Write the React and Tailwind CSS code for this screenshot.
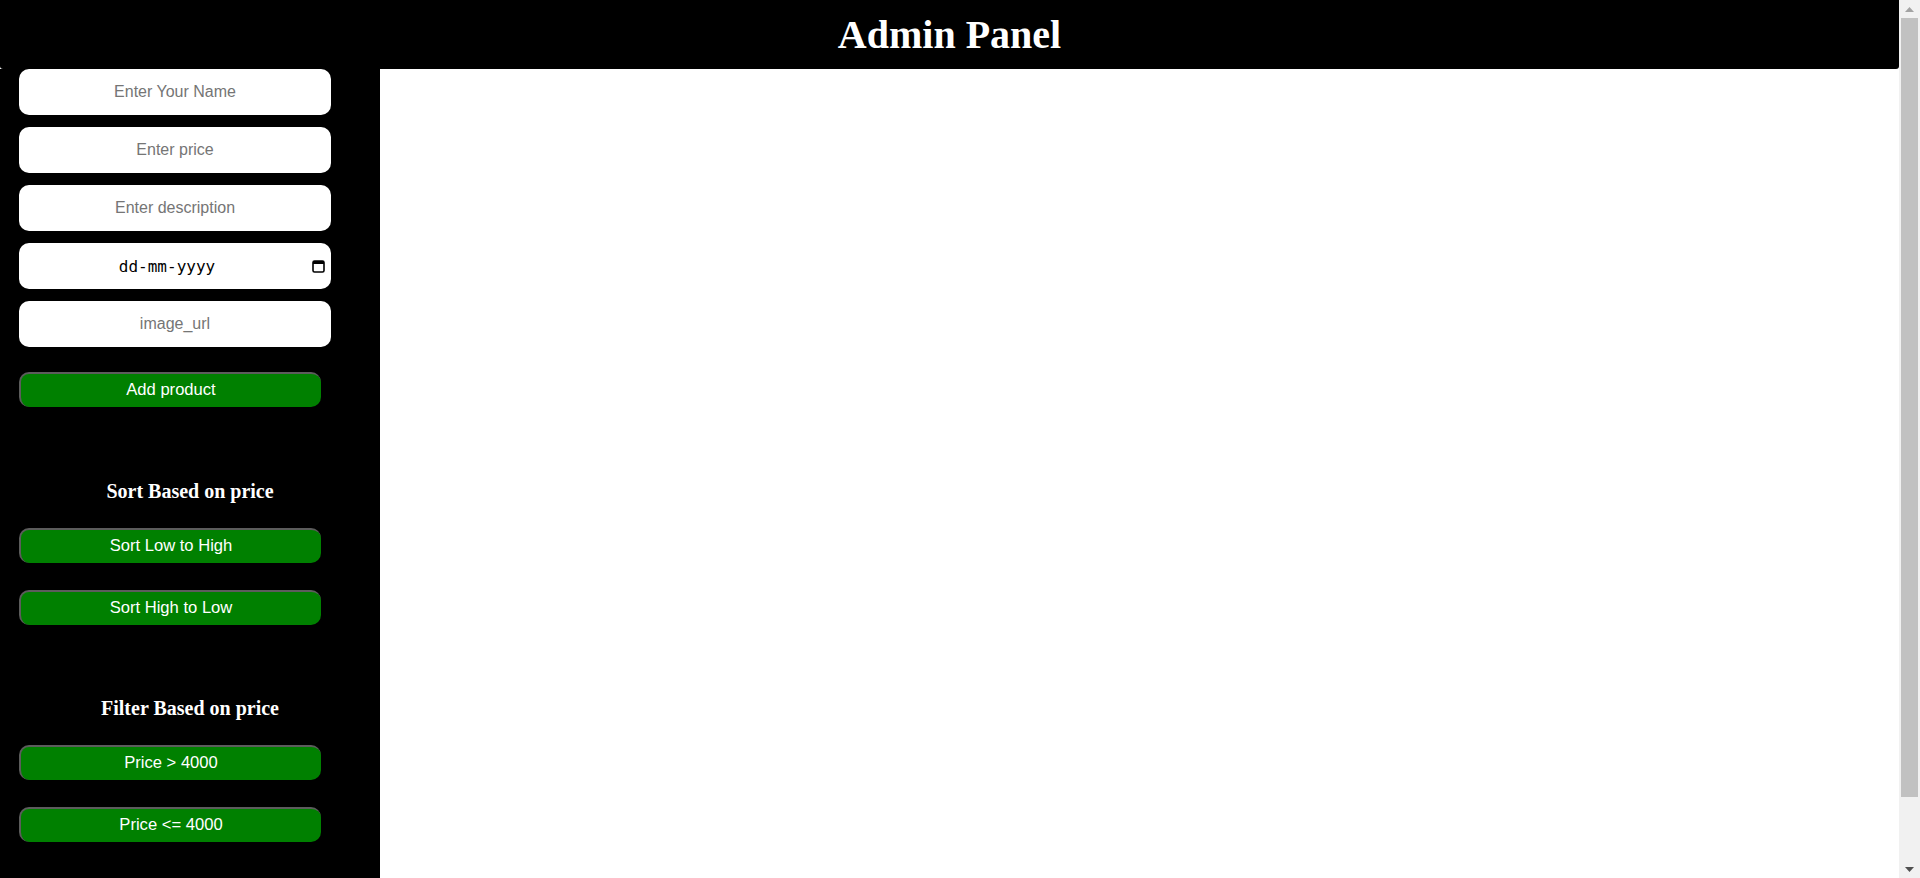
const inputClass =
    "h-[46px] w-[312px] rounded-[10px] bg-white text-center text-[16px] text-black placeholder:text-[#757575] outline-none font-['Liberation_Sans',Arial,sans-serif]";

const buttonClass =
    "h-[35px] w-[302px] rounded-[10px] border-l-2 border-t-2 border-[#5c5c5c] bg-[#008000] text-[16.6px] text-white font-['Liberation_Sans',Arial,sans-serif]";

const headingClass =
    "text-center text-[20px] leading-[23px] font-bold text-white font-['Liberation_Serif','Times_New_Roman',serif]";

const CalendarIcon = () => (
    <svg width="13" height="14" viewBox="0 0 13 14" className="pointer-events-none absolute right-[6px] top-[16px]">
        <rect x="1" y="2" width="11" height="11" rx="1.5" fill="none" stroke="#000" strokeWidth="1.6" />
        <rect x="1" y="2" width="11" height="3" fill="#000" />
    </svg>
);

// page scrollbar as drawn in the screenshot
const ScrollBar = () => (
    <div className="flex h-screen w-[21px] shrink-0 flex-col bg-[#f1f1f1]">
        <div className="flex h-[18px] items-center justify-center">
            <svg width="9" height="5" viewBox="0 0 9 5">
                <polygon points="4.5,0 9,5 0,5" fill="#a3a3a3" />
            </svg>
        </div>
        <div className="mx-[2px] h-[779px] bg-[#c1c1c1]"></div>
        <div className="flex-1"></div>
        <div className="flex h-[18px] items-center justify-center">
            <svg width="9" height="5" viewBox="0 0 9 5">
                <polygon points="0,0 9,0 4.5,5" fill="#505050" />
            </svg>
        </div>
    </div>
);

const App = () => {
    return (
        <div className="flex h-screen overflow-hidden bg-white">
            <div className="flex-1 overflow-hidden">
                <div className="flex min-h-[949px] flex-col">
                    <header className="flex h-[69px] items-center justify-center rounded-b-[3px] bg-black">
                        <h1 className="text-[40px] font-bold leading-none text-white font-['Liberation_Serif','Times_New_Roman',serif]">
                            Admin Panel
                        </h1>
                    </header>

                    <div className="flex flex-1">
                        <aside className="flex w-[380px] flex-col bg-black pl-[19px]">
                            <form className="flex flex-col gap-[12px]">
                                <input type="text" placeholder="Enter Your Name" className={inputClass} />
                                <input type="text" placeholder="Enter price" className={inputClass} />
                                <input type="text" placeholder="Enter description" className={inputClass} />
                                <div className="relative w-[312px]">
                                    <input
                                        type="text"
                                        placeholder="dd-mm-yyyy"
                                        className="h-[46px] w-[312px] rounded-[10px] bg-white pr-[16px] text-center text-[16px] text-black placeholder:text-black outline-none font-['DejaVu_Sans_Mono','Liberation_Mono',monospace]"
                                    />
                                    <CalendarIcon />
                                </div>
                                <input type="text" placeholder="image_url" className={inputClass} />
                            </form>
                            <button className={`${buttonClass} mt-[25px]`}>Add product</button>

                            <div className="mt-[73px] w-[342px]">
                                <h3 className={headingClass}>Sort Based on price</h3>
                            </div>
                            <button className={`${buttonClass} mt-[25px]`}>Sort Low to High</button>
                            <button className={`${buttonClass} mt-[27px]`}>Sort High to Low</button>

                            <div className="mt-[72px] w-[342px]">
                                <h3 className={headingClass}>Filter Based on price</h3>
                            </div>
                            <button className={`${buttonClass} mt-[25px]`}>Price &gt; 4000</button>
                            <button className={`${buttonClass} mt-[27px]`}>Price &lt;= 4000</button>
                        </aside>

                        <main className="flex-1 bg-white"></main>
                    </div>
                </div>
            </div>
            <ScrollBar />
        </div>
    );
};

export default App;
